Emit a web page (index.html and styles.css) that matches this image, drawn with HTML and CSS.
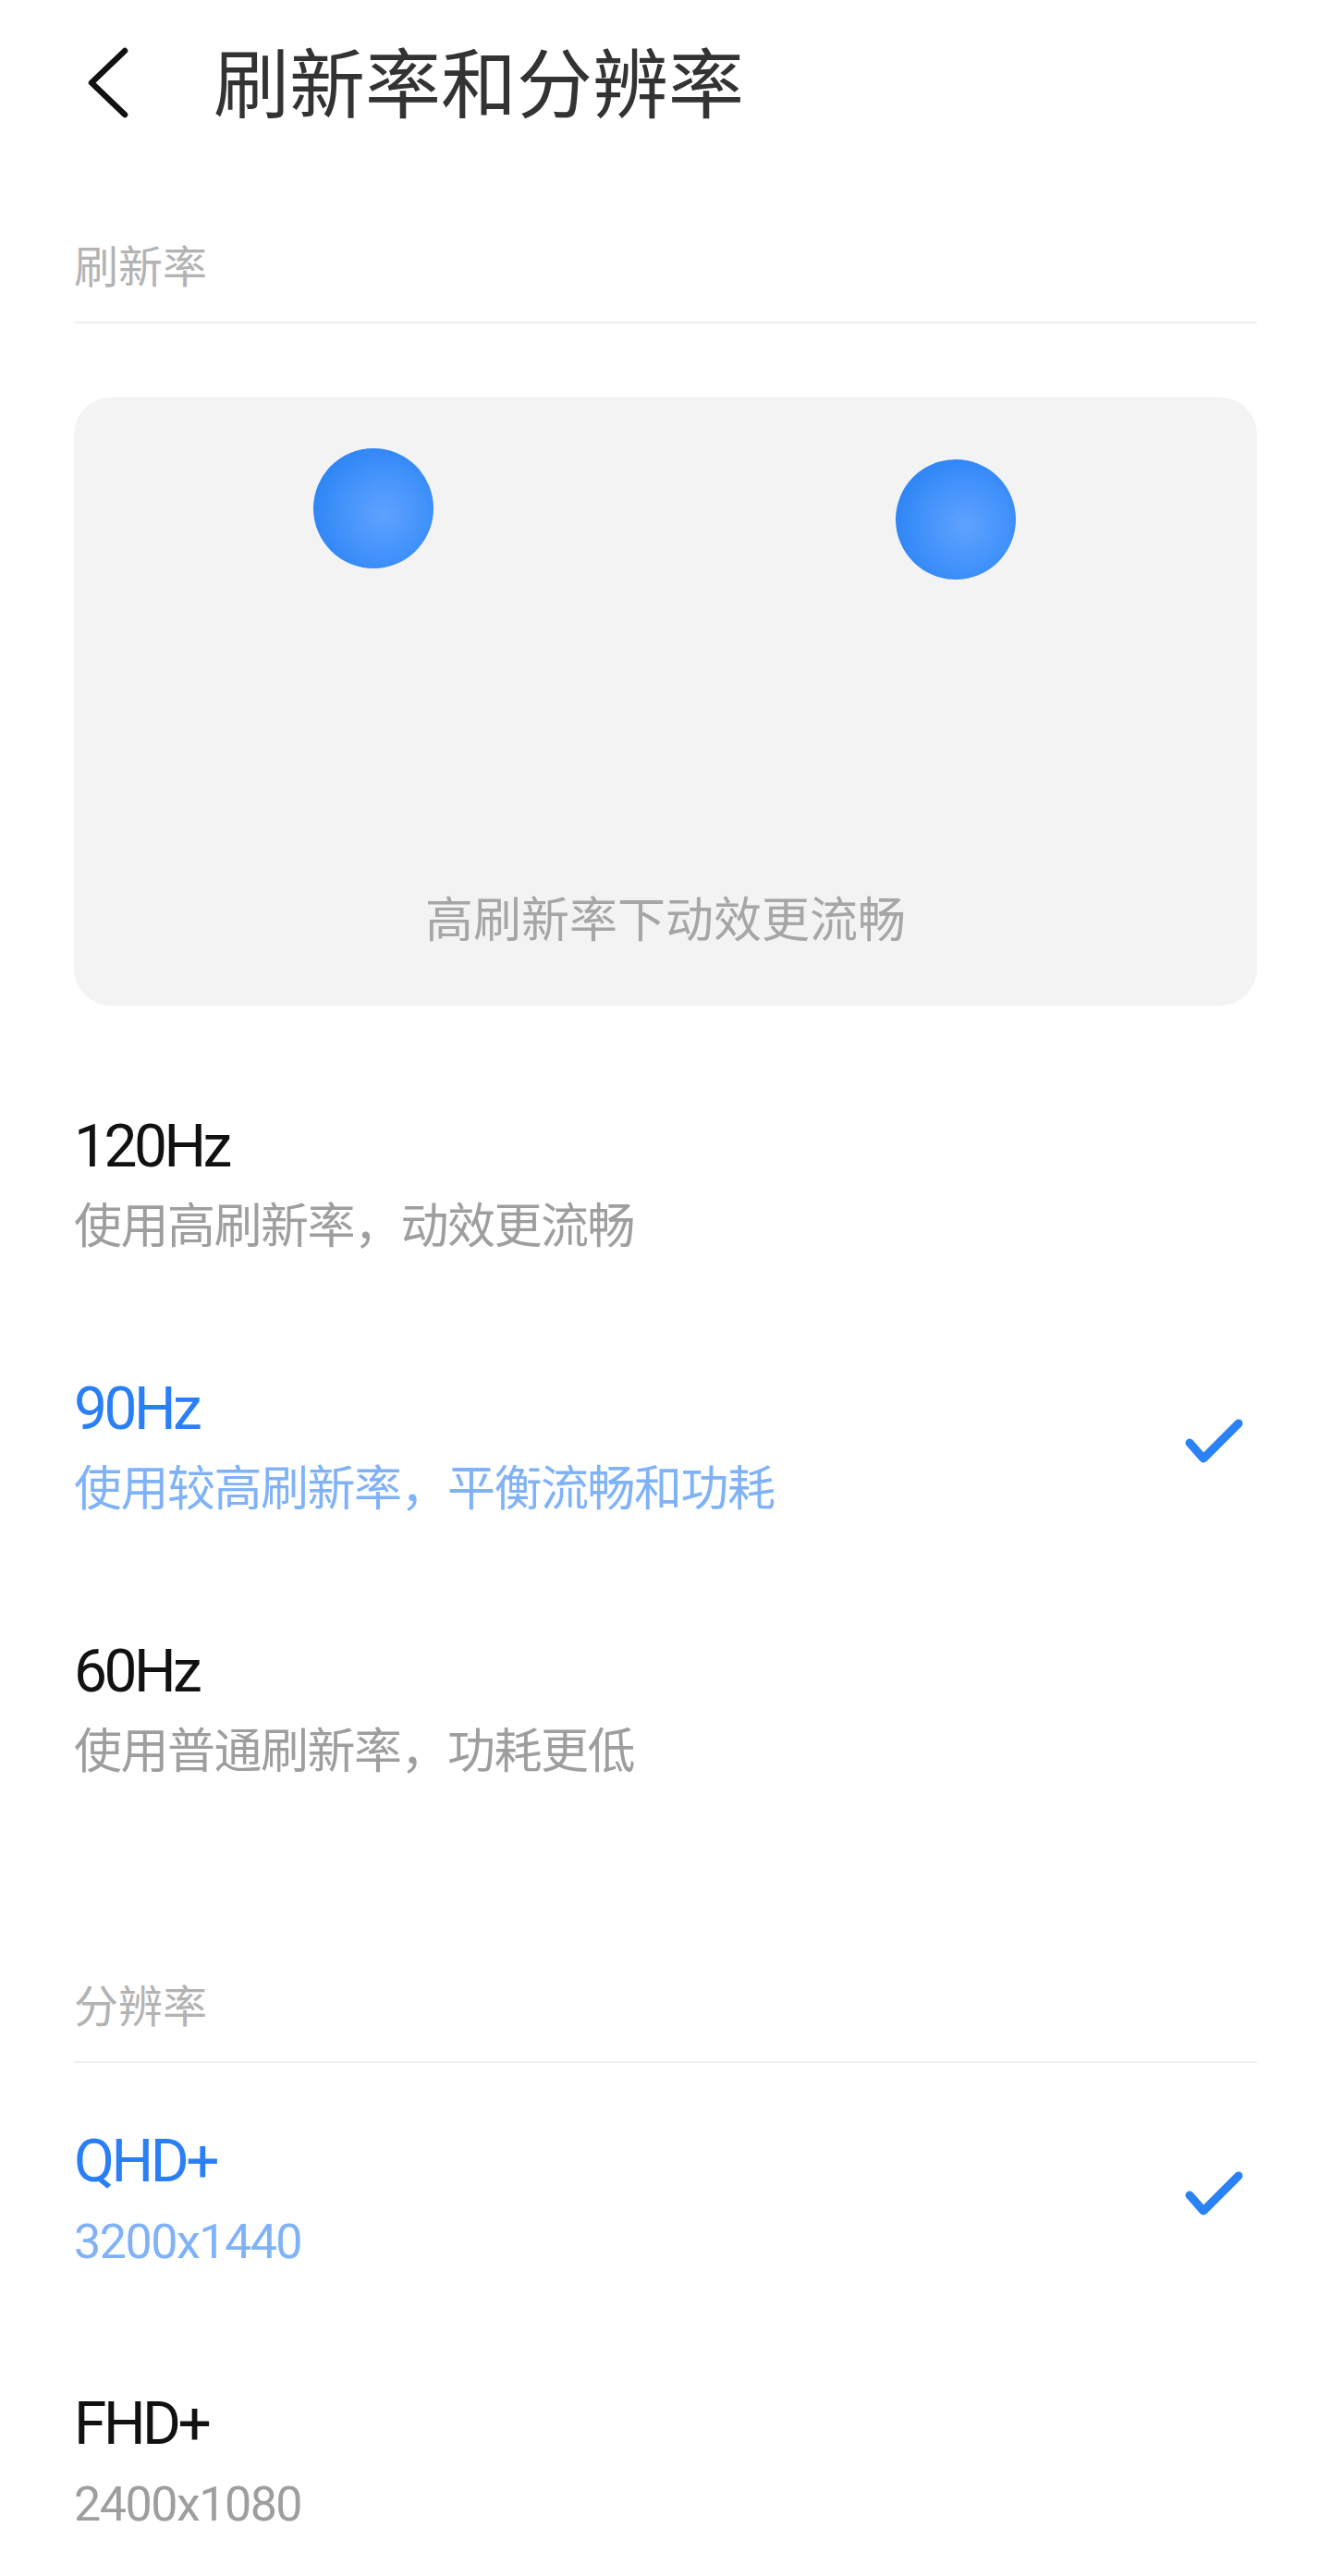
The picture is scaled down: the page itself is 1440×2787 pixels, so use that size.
FILE: index.html
```html
<!DOCTYPE html>
<html lang="zh-CN">
<head>
<meta charset="utf-8">
<title>刷新率和分辨率</title>
<link rel="stylesheet" href="styles.css">
</head>
<body>
<header class="topbar">
  <button class="back" aria-label="返回">
    <svg width="60" height="80" viewBox="0 0 60 80"><path d="M47 4 L11 38.5 L47 73" fill="none" stroke="#111" stroke-width="6.5" stroke-linecap="round" stroke-linejoin="round"/></svg>
  </button>
  <h1 class="title">刷新率和分辨率</h1>
</header>
<main class="content">
  <section class="group group-refresh">
    <div class="group-label">刷新率</div>
    <div class="preview">
      <span class="ball ball-a"></span>
      <span class="ball ball-b"></span>
      <p class="preview-caption">高刷新率下动效更流畅</p>
    </div>
    <ul class="options">
      <li class="option">
        <div class="option-text">
          <div class="option-title">120Hz</div>
          <div class="option-sub">使用高刷新率，动效更流畅</div>
        </div>
      </li>
      <li class="option is-selected">
        <div class="option-text">
          <div class="option-title">90Hz</div>
          <div class="option-sub">使用较高刷新率，平衡流畅和功耗</div>
        </div>
        <svg class="check" viewBox="0 0 64 50"><path d="M5 27 L20 44 L58 6" fill="none" stroke="#2a82f6" stroke-width="9" stroke-linecap="round" stroke-linejoin="round"/></svg>
      </li>
      <li class="option">
        <div class="option-text">
          <div class="option-title">60Hz</div>
          <div class="option-sub">使用普通刷新率，功耗更低</div>
        </div>
      </li>
    </ul>
  </section>
  <section class="group group-res">
    <div class="group-label">分辨率</div>
    <ul class="options">
      <li class="option is-selected">
        <div class="option-text">
          <div class="option-title">QHD+</div>
          <div class="option-sub">3200x1440</div>
        </div>
        <svg class="check" viewBox="0 0 64 50"><path d="M5 27 L20 44 L58 6" fill="none" stroke="#2a82f6" stroke-width="9" stroke-linecap="round" stroke-linejoin="round"/></svg>
      </li>
      <li class="option">
        <div class="option-text">
          <div class="option-title">FHD+</div>
          <div class="option-sub">2400x1080</div>
        </div>
      </li>
    </ul>
  </section>
</main>
</body>
</html>
```
FILE: styles.css
```css
* { box-sizing: border-box; }
html, body { margin: 0; padding: 0; background: #fff; }
body {
  font-family: Roboto, "Noto Sans CJK SC", sans-serif;
  width: 1440px;
  height: 2787px;
  overflow: hidden;
}
.topbar {
  height: 182px;
  display: flex;
  align-items: center;
  padding-left: 88px;
}
.back {
  width: 60px;
  height: 80px;
  padding: 0;
  border: 0;
  background: none;
  display: block;
}
.back svg { display: block; }
.title {
  margin: 4px 0 0 83px;
  font-size: 82px;
  line-height: 100px;
  font-weight: 400;
  color: #333;
}
.content { padding: 0 80px; }
.group-label {
  font-size: 48px;
  line-height: 60px;
  color: #b3b3b3;
  padding-top: 5px;
  padding-bottom: 28px;
  border-bottom: 2px solid #efefef;
}
.group-refresh .group-label { margin-top: 73px; }
.group-res .group-label { margin-top: 151px; }
.preview {
  position: relative;
  margin-top: 80px;
  height: 658px;
  background: #f3f3f3;
  border-radius: 40px;
  display: flex;
  align-items: flex-end;
  justify-content: center;
  padding-bottom: 61px;
}
.preview-caption {
  margin: 0;
  font-size: 52px;
  line-height: 60px;
  color: #a6a6a6;
}
.ball {
  position: absolute;
  width: 130px;
  height: 130px;
  border-radius: 50%;
  background: radial-gradient(circle at 58% 55%, #5fa2ff 0%, #4594fb 40%, #2b83f5 80%, #2a80f3 100%);
}
.ball-a { left: 259px; top: 55px; }
.ball-b { left: 889px; top: 67px; }
.options {
  list-style: none;
  margin: 46px 0 0;
  padding: 0;
}
.group-res .options { margin-top: 0; }
.option {
  display: flex;
  align-items: center;
  justify-content: space-between;
  padding: 72px 0 60px;
}
.group-res .option:last-child { padding-bottom: 25px; }
.option-title {
  font-size: 64px;
  line-height: 70px;
  letter-spacing: -3.5px;
  color: #111;
}
.option-sub {
  margin-top: 22px;
  font-size: 52px;
  line-height: 60px;
  letter-spacing: -1.5px;
  color: #9e9e9e;
}
.option.is-selected .option-title { color: #2b7ff6; }
.option.is-selected .option-sub { color: #80b2f8; }
.check {
  width: 64px;
  height: 50px;
  margin-right: 14px;
  margin-bottom: 14px;
  flex: none;
}
```
